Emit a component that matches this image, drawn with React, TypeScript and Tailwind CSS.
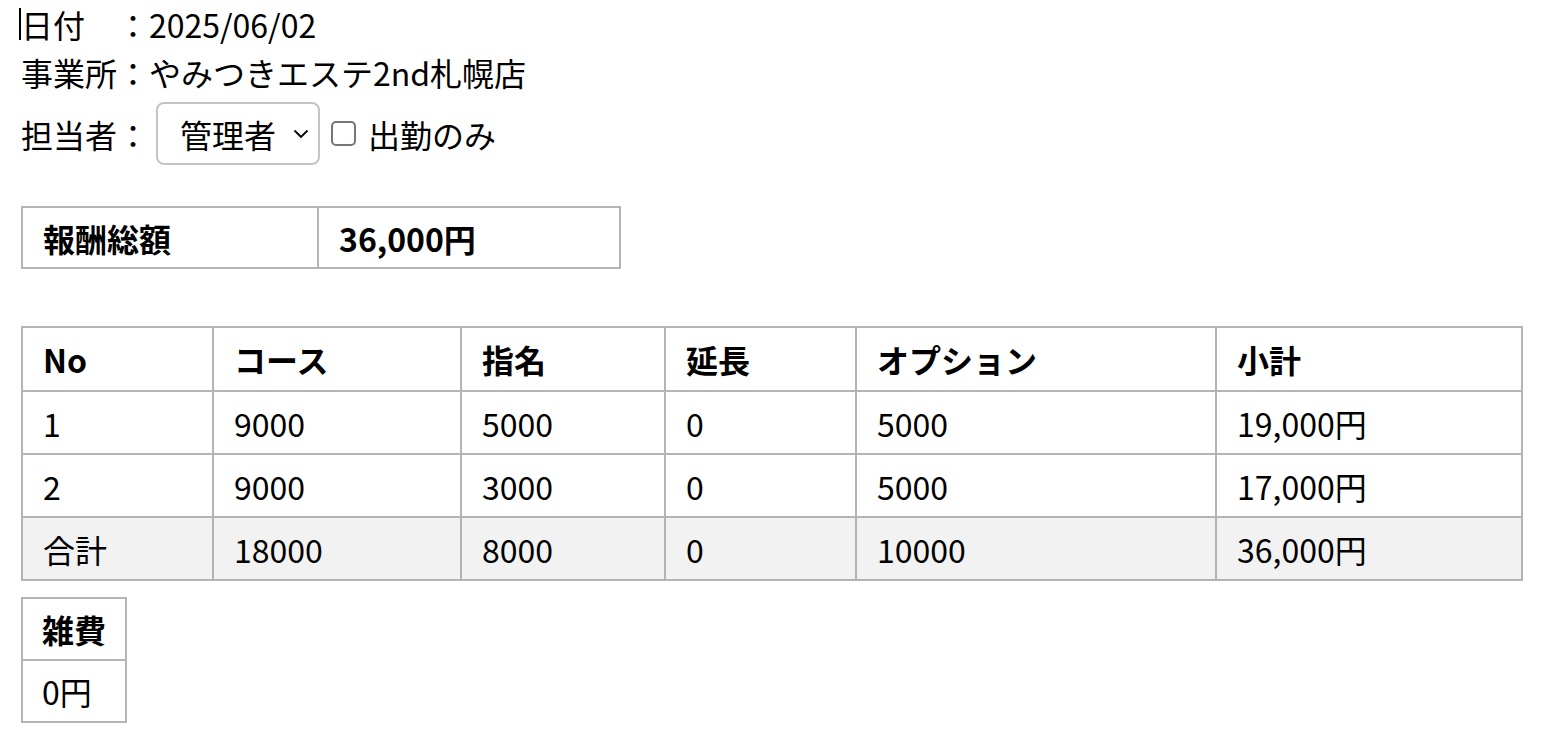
const rows = [
  { no: "1", course: "9000", shimei: "5000", encho: "0", option: "5000", subtotal: "19,000円" },
  { no: "2", course: "9000", shimei: "3000", encho: "0", option: "5000", subtotal: "17,000円" },
];

const cell = "whitespace-nowrap border-2 border-[#b4b4b4] px-[20px] text-left align-middle";

export default function App() {
  return (
    <div
      className="min-h-screen bg-white px-[21px] text-[32px] text-black"
      style={{ fontFamily: '"Noto Sans CJK JP", "Noto Sans", sans-serif' }}
    >
      {/* ヘッダー情報 */}
      <div className="flex h-[48px] items-center">
        <span className="-ml-[2px] inline-block h-[32px] w-[2px] bg-black" />
        <span>日付　：2025/06/02</span>
      </div>
      <div className="flex h-[48px] items-center">事業所：やみつきエステ2nd札幌店</div>

      {/* 担当者 */}
      <div className="mt-[6px] flex h-[63px] items-center">
        <span>担当者：</span>
        <div className="ml-[7px] flex h-[63px] w-[164px] items-center justify-between rounded-[8px] border-2 border-[#c4c4c4] pl-[22px] pr-[8px]">
          <span>管理者</span>
          <svg width="16" height="10" viewBox="0 0 16 10" className="mr-[1px]">
            <polyline points="1.5,1.5 8,8 14.5,1.5" fill="none" stroke="#000" strokeWidth="1.8" />
          </svg>
        </div>
        <span className="ml-[11px] inline-block h-[25px] w-[25px] rounded-[5px] border-2 border-[#767676]" />
        <span className="ml-[12px]">出勤のみ</span>
      </div>

      {/* 報酬総額 */}
      <table className="mt-[41px] w-[600px] table-fixed border-collapse">
        <tbody>
          <tr className="h-[61px]">
            <td className={`${cell} w-[296px] font-bold`}>報酬総額</td>
            <td className={`${cell} font-bold`}>36,000円</td>
          </tr>
        </tbody>
      </table>

      {/* 明細 */}
      <table className="mt-[57px] w-[1502px] table-fixed border-collapse">
        <thead>
          <tr className="h-[64px]">
            <th className={`${cell} w-[191px] font-bold`}>No</th>
            <th className={`${cell} w-[248px] font-bold`}>コース</th>
            <th className={`${cell} w-[204px] font-bold`}>指名</th>
            <th className={`${cell} w-[191px] font-bold`}>延長</th>
            <th className={`${cell} w-[360px] font-bold`}>オプション</th>
            <th className={`${cell} font-bold`}>小計</th>
          </tr>
        </thead>
        <tbody>
          {rows.map((r) => (
            <tr key={r.no} className="h-[63px]">
              <td className={cell}>{r.no}</td>
              <td className={cell}>{r.course}</td>
              <td className={cell}>{r.shimei}</td>
              <td className={cell}>{r.encho}</td>
              <td className={cell}>{r.option}</td>
              <td className={cell}>{r.subtotal}</td>
            </tr>
          ))}
          <tr className="h-[63px] bg-[#f2f2f2]">
            <td className={cell}>合計</td>
            <td className={cell}>18000</td>
            <td className={cell}>8000</td>
            <td className={cell}>0</td>
            <td className={cell}>10000</td>
            <td className={cell}>36,000円</td>
          </tr>
        </tbody>
      </table>

      {/* 雑費 */}
      <table className="mt-[16px] border-collapse">
        <tbody>
          <tr className="h-[62px]">
            <th className={`${cell} !px-[19px] font-bold`}>雑費</th>
          </tr>
          <tr className="h-[62px]">
            <td className={`${cell} !px-[19px]`}>0円</td>
          </tr>
        </tbody>
      </table>
    </div>
  );
}
